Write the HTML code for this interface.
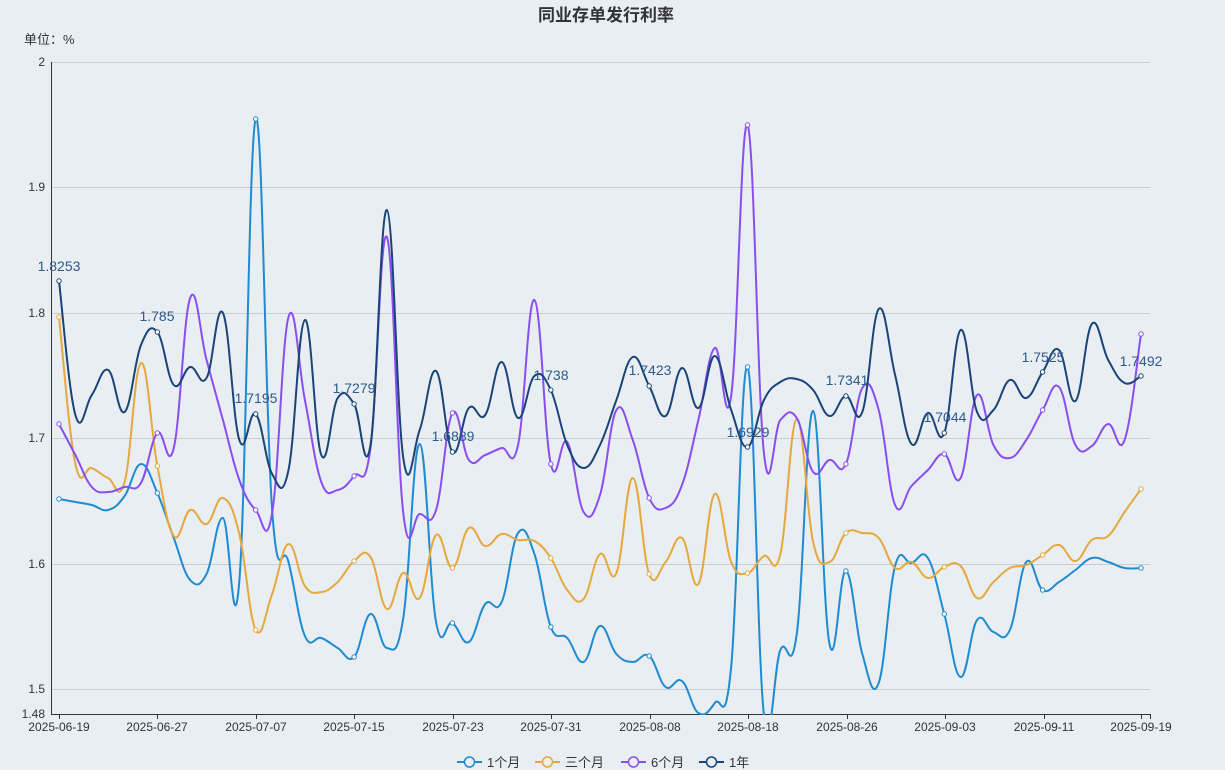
<!DOCTYPE html>
<html><head><meta charset="utf-8"><style>
html,body{margin:0;padding:0;background:#e9eef3;}
svg{display:block;font-family:"Liberation Sans","Noto Sans CJK SC",sans-serif;}
</style></head><body>
<svg id="c" width="1225" height="770" viewBox="0 0 1225 770" xmlns="http://www.w3.org/2000/svg">
<defs><clipPath id="pc"><rect x="51" y="40" width="1110" height="675"/></clipPath></defs>
<rect width="1225" height="770" fill="#e9eef3"/>
<text x="606" y="21" text-anchor="middle" font-size="17" font-weight="bold" fill="#333">同业存单发行利率</text>
<text x="24" y="44" font-size="13" fill="#333">单位：%</text>
<g stroke="#cccccc" stroke-width="1">
<line x1="51" y1="62.5" x2="1150" y2="62.5"/><line x1="51" y1="187.5" x2="1150" y2="187.5"/>
<line x1="51" y1="313.5" x2="1150" y2="313.5"/><line x1="51" y1="438.5" x2="1150" y2="438.5"/>
<line x1="51" y1="564.5" x2="1150" y2="564.5"/><line x1="51" y1="689.5" x2="1150" y2="689.5"/>
</g>
<line x1="51.5" y1="62" x2="51.5" y2="714" stroke="#333"/>
<line x1="51" y1="714.5" x2="1150" y2="714.5" stroke="#333"/>
<g font-size="12" fill="#333" text-anchor="end">
<text x="45" y="66">2</text><text x="45" y="191">1.9</text><text x="45" y="317">1.8</text>
<text x="45" y="442">1.7</text><text x="45" y="568">1.6</text><text x="45" y="693">1.5</text><text x="45" y="718">1.48</text>
</g>
<g id="ticks" stroke="#333"></g>
<g font-size="12" fill="#333" text-anchor="middle">
<text x="59" y="731">2025-06-19</text><text x="157" y="731">2025-06-27</text><text x="256" y="731">2025-07-07</text>
<text x="354" y="731">2025-07-15</text><text x="453" y="731">2025-07-23</text><text x="551" y="731">2025-07-31</text>
<text x="650" y="731">2025-08-08</text><text x="748" y="731">2025-08-18</text><text x="847" y="731">2025-08-26</text>
<text x="945" y="731">2025-09-03</text><text x="1044" y="731">2025-09-11</text><text x="1141" y="731">2025-09-19</text>
</g>
<g id="lines" fill="none" stroke-width="2" clip-path="url(#pc)"></g>
<g id="dots"></g>
<g font-size="14" fill="#2c5a8c" text-anchor="middle">
<text x="59" y="271">1.8253</text><text x="157" y="321">1.785</text><text x="256" y="403">1.7195</text>
<text x="354" y="393">1.7279</text><text x="453" y="441">1.6889</text><text x="551" y="380">1.738</text>
<text x="650" y="375">1.7423</text><text x="748" y="437">1.6929</text><text x="847" y="385">1.7341</text>
<text x="945" y="422">1.7044</text><text x="1043" y="362">1.7525</text><text x="1141" y="366">1.7492</text>
</g>
<g font-size="13" fill="#333">
<line x1="457" y1="762" x2="482" y2="762" stroke="#1f8bd0" stroke-width="2"/><circle cx="469.5" cy="762" r="5" fill="#e9eef3" stroke="#1f8bd0" stroke-width="1.5"/>
<text x="487" y="767">1个月</text>
<line x1="535" y1="762" x2="560" y2="762" stroke="#e6a83d" stroke-width="2"/><circle cx="547.5" cy="762" r="5" fill="#e9eef3" stroke="#e6a83d" stroke-width="1.5"/>
<text x="565" y="767">三个月</text>
<line x1="621" y1="762" x2="646" y2="762" stroke="#8a4ef0" stroke-width="2"/><circle cx="633.5" cy="762" r="5" fill="#e9eef3" stroke="#8a4ef0" stroke-width="1.5"/>
<text x="651" y="767">6个月</text>
<line x1="699" y1="762" x2="724" y2="762" stroke="#1a4478" stroke-width="2"/><circle cx="711.5" cy="762" r="5" fill="#e9eef3" stroke="#1a4478" stroke-width="1.5"/>
<text x="729" y="767">1年</text>
</g>
</svg>
<script>
var X=function(i){return 59+i*1082/66;};
var S=[
["#1f8bd0",[499,502,505,510,496,464,493,538,580,574,518,581,119,510,562,636,638,648,657,614,648,618,444,622,623,642,604,602,533,554,627,638,662,626,654,662,656,687,681,713,703,667,367,715,650,634,411,644,571,654,683,566,563,558,614,677,620,632,630,562,590,582,570,558,562,568,568]],
["#e6a83d",[317,464,468,478,482,363,466,536,510,524,498,534,630,594,544,586,592,582,561,557,609,573,598,535,568,528,546,534,540,541,558,590,599,554,573,478,574,562,538,584,494,562,573,556,554,419,542,562,533,533,538,568,562,578,567,566,598,582,568,565,555,545,561,540,536,512,489]],
["#8a4ef0",[424,455,487,492,487,483,433,448,298,360,420,480,510,513,317,400,482,490,476,448,237,513,514,510,413,460,455,448,445,300,464,442,512,495,410,440,498,508,485,420,348,396,125,453,420,418,472,460,464,388,410,505,486,470,454,478,395,445,458,440,410,387,445,446,424,440,334]],
["#1a4478",[281,415,395,370,412,345,332,385,367,378,313,440,414,474,470,320,455,398,404,445,210,458,430,371,452,408,415,362,418,376,390,445,468,445,400,357,386,416,368,408,356,410,447,400,382,379,390,416,396,412,309,375,444,413,433,330,412,410,380,398,372,350,401,324,360,383,376]]
];
var ns="http://www.w3.org/2000/svg",L=document.getElementById("lines"),D=document.getElementById("dots"),T=document.getElementById("ticks");
[59,157,256,354,453,551,650,748,847,945,1044,1141,1150].forEach(function(x){var l=document.createElementNS(ns,"line");l.setAttribute("x1",x+.5);l.setAttribute("x2",x+.5);l.setAttribute("y1",714);l.setAttribute("y2",719);T.appendChild(l);});
S.forEach(function(s){
 var c=s[0],v=s[1],n=v.length,p=[];for(var i=0;i<n;i++)p.push([X(i),v[i]]);
 var d="M"+p[0][0]+","+p[0][1],k=0.4;
 for(var i=0;i<n-1;i++){var a=p[Math.max(i-1,0)],b=p[i],e=p[i+1],f=p[Math.min(i+2,n-1)];
  var c1x=b[0]+(e[0]-a[0])*k/2,c1y=b[1]+(e[1]-a[1])*k/2,c2x=e[0]-(f[0]-b[0])*k/2,c2y=e[1]-(f[1]-b[1])*k/2;
  d+=" C"+c1x+","+c1y+" "+c2x+","+c2y+" "+e[0]+","+e[1];}
 var pa=document.createElementNS(ns,"path");pa.setAttribute("d",d);pa.setAttribute("stroke",c);L.appendChild(pa);
 for(var i=0;i<n;i+=6){var ci=document.createElementNS(ns,"circle");ci.setAttribute("cx",p[i][0]);ci.setAttribute("cy",p[i][1]);ci.setAttribute("r",2.2);ci.setAttribute("fill","#fff");ci.setAttribute("stroke",c);ci.setAttribute("stroke-width",1);D.appendChild(ci);}
});
</script>
</body></html>
